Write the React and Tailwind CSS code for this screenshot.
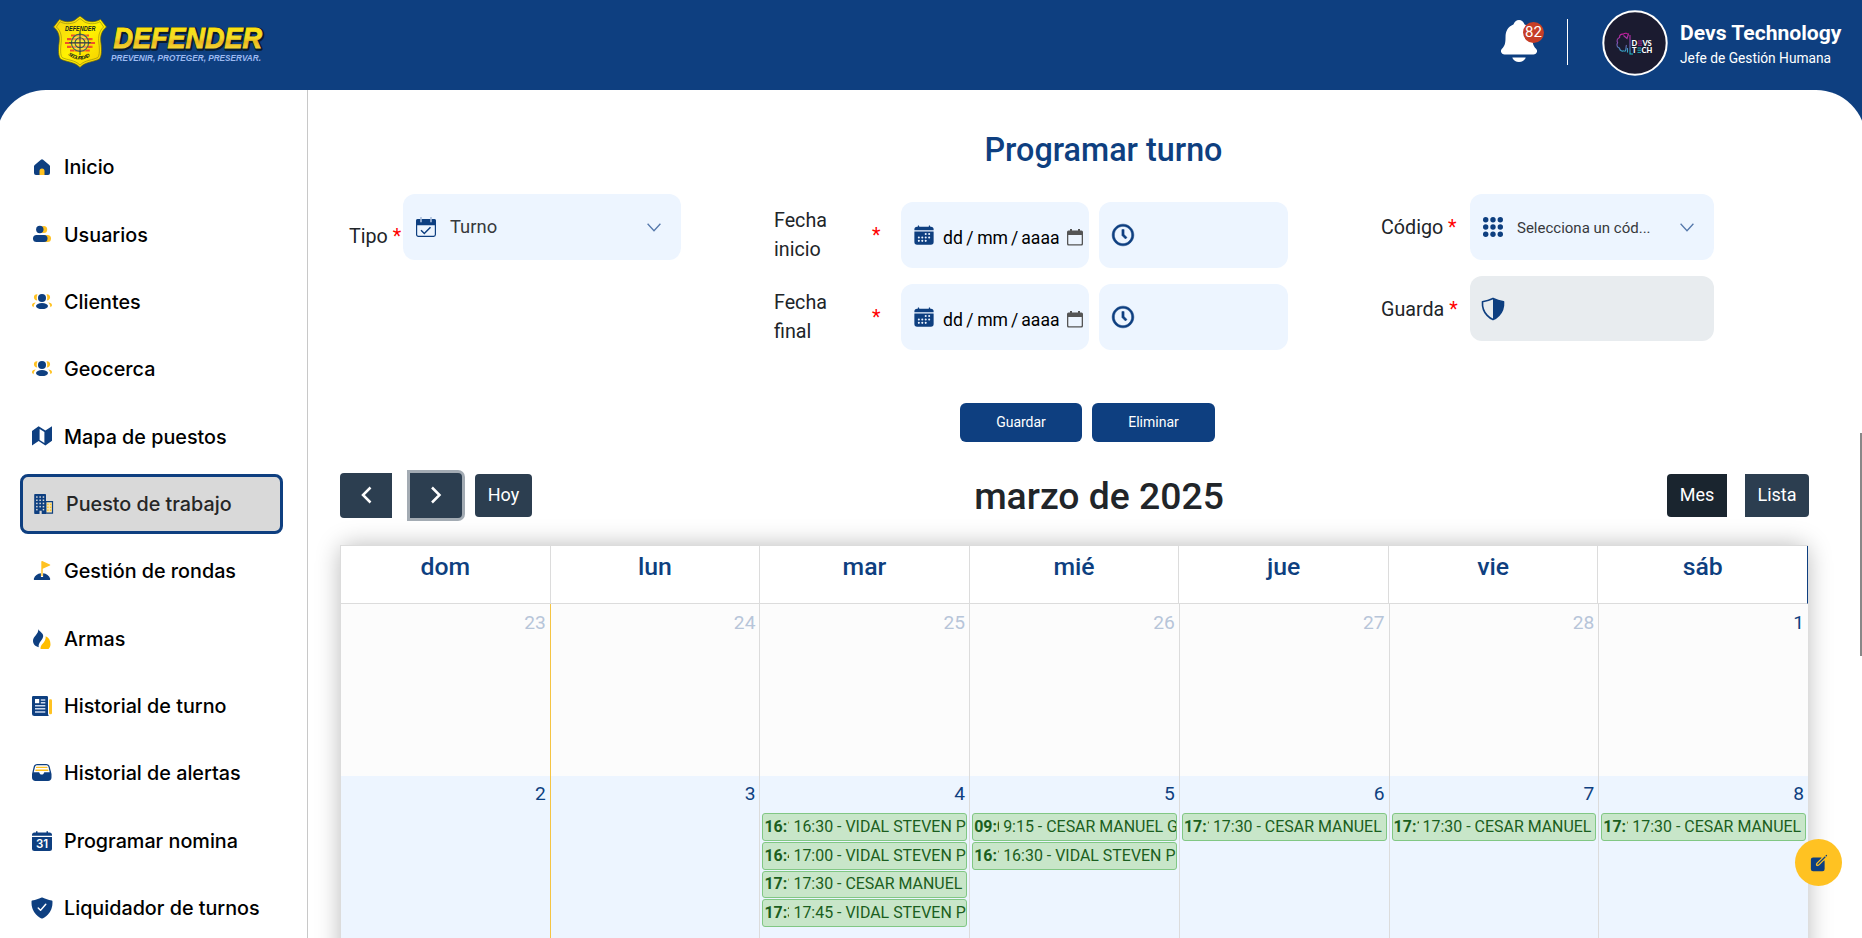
import React from "react";
import { BiTimeFive } from "react-icons/bi";
import {
  IoCalendar,
  IoShieldHalf,
  IoNotifications,
  IoShieldCheckmark,
  IoCreate,
} from "react-icons/io5";

const NAVY = "#0e3f80";
const GOLD = "#ffc222";

/* ---------- sidebar icons ---------- */

const HomeIcon = () => (
  <svg width="20" height="20" viewBox="0 0 20 20">
    <path d="M8.9 2.7a1.6 1.6 0 0 1 2.2 0l6.2 5.2c.5.4.7.9.7 1.500V16a2 2 0 0 1-2 2H4a2 2 0 0 1-2-2V9.400c0-.6.2-1.100.7-1.500z" fill={NAVY} />
    <path d="M7.500 18v-4a2.500 2.500 0 0 1 5 0v4z" fill={GOLD} />
  </svg>
);

const UsersIcon = () => (
  <svg width="20" height="20" viewBox="0 0 20 20">
    <circle cx="11.700" cy="5.500" r="3.500" fill={GOLD} />
    <rect x="6" y="11" width="13" height="7" rx="3.500" fill={GOLD} />
    <circle cx="7.800" cy="5.500" r="3.700" fill={NAVY} />
    <rect x="1" y="11" width="14.500" height="7" rx="3.500" fill={NAVY} />
  </svg>
);

const GroupIcon = () => (
  <svg width="20" height="20" viewBox="0 0 20 20">
    <g fill={GOLD}>
      <path d="M5.500 2.300C3.500 2 1.900 3.400 1.900 5.300s1.500 3.300 3.300 3.200C4.500 6.300 4.600 4 5.500 2.300zM14.500 2.300c2-.3 3.600 1.100 3.600 3s-1.500 3.300-3.300 3.200c.7-2.200.6-4.500-.3-6.200z" />
      <path d="M3.800 10.600C1.600 10.700 0 11.800 0 13.200c0 .8.600 1.500 1.600 2 .1-1.800.9-3.400 2.200-4.600zM16.200 10.600c2.200.1 3.800 1.200 3.800 2.600 0 .8-.6 1.500-1.600 2-.1-1.800-.9-3.400-2.200-4.600z" />
    </g>
    <circle cx="10" cy="6" r="4" fill={NAVY} />
    <ellipse cx="10" cy="14.100" rx="6" ry="3" fill={NAVY} />
  </svg>
);

const MapIcon = () => (
  <svg width="20" height="20" viewBox="0 0 20 20">
    <path d="M0 5L6.600.3 13.400 4.500 20 .3v14.500l-6.600 4.700-6.800-4.400L0 19.500z" fill={NAVY} />
    <path d="M7.600 2.900l4.800 3v11l-4.800-3z" fill="#fff" />
  </svg>
);

const BuildingIcon = () => (
  <svg width="20" height="20" viewBox="0 0 20 20">
    <path d="M11.800 7.700h6.700v11.500h-6.700z" fill="#f7e3ae" stroke={NAVY} strokeWidth="1.200" />
    <path d="M1 0h10.200a.8.8 0 0 1 .8.8V20H7.700v-3.300H5.500V20H1a.8.8 0 0 1-.8-.8V.8A.8.8 0 0 1 1 0z" fill={NAVY} />
    <g fill="#d9d9d9">
      {[2.300, 5.500, 8.700].map((y) =>
        [2.100, 5.400, 8.700].map((x) => <rect key={x + "-" + y} x={x} y={y} width="1.500" height="1.500" />)
      )}
      {[11.900, 14.900].map((y) => [2.100, 8.700].map((x) => <rect key={x + "-" + y} x={x} y={y} width="1.500" height="1.500" />))}
      <rect x="5.400" y="11.900" width="1.500" height="1.500" />
    </g>
    <g fill={GOLD}>
      {[9.700, 12.600, 15.500].map((y) => [13.200, 16].map((x) => <rect key={x + "-" + y} x={x} y={y} width="1.400" height="1.400" />))}
    </g>
  </svg>
);

const FlagIcon = () => (
  <svg width="20" height="20" viewBox="0 0 20 20">
    <path d="M9.300.7c0-.5.5-.8 1-.6l7.600 3.400c.5.200.5.800 0 1l-7.200 3.300V15H9.300z" fill={GOLD} />
    <path d="M8.900 12.200V16h2.200v-3.800c3.400.3 6.100 2.300 7 5.200.3 1-.1 1.600-1 1.600H2.900c-.9 0-1.300-.6-1-1.600.9-2.900 3.600-4.900 7-5.200z" fill={NAVY} />
  </svg>
);

const FlameIcon = () => (
  <svg width="20" height="20" viewBox="0 0 20 20">
    <path d="M6.300 0c.3 2.100 4.900 3.700 4.900 7 0 3.800-5.300 6.200-4.500 11.300C3.200 17.300 1 15.300 1 11.800 1 7.300 6.800 5.300 6.300 0z" fill={NAVY} />
    <path d="M13.700 7.200c3.200 1.200 4.800 4.400 4.800 8.100 0 1.900-.8 3.600-2 4.700H8.600c-.3-1.800.3-3.300 2-5.200 1.900-2.200 3.300-4.200 3.100-7.600z" fill="#ffbe00" />
  </svg>
);

const NewsIcon = () => (
  <svg width="20" height="20" viewBox="0 0 20 20">
    <rect x="17" y="3.200" width="3" height="15" rx="1.200" fill={GOLD} />
    <path d="M1.200 0h13.600A1.200 1.200 0 0 1 16 1.200v16.300c0 .9.200 1.700.8 2.500H2.500A2.500 2.500 0 0 1 0 17.500V1.200A1.200 1.200 0 0 1 1.200 0z" fill={NAVY} />
    <rect x="3" y="3" width="4.200" height="4.200" fill="#fff" />
    <path d="M8.800 4h4.500M8.800 6.800h4.500M3 9.700h10.300M3 12.800h10.300M3 16h10.300" stroke="#c9d8ee" strokeWidth="1.400" />
  </svg>
);

const TrayIcon = () => (
  <svg width="20" height="20" viewBox="0 0 20 20">
    <path d="M5.300 1h8.900c1.700 0 3.100 1 3.500 2.700L19.500 11v3.600c0 2-1.500 3.400-3.400 3.400H3.400C1.500 18 0 16.600 0 14.600V11l1.700-7.300C2.100 2 3.600 1 5.300 1z" fill={NAVY} />
    <path d="M5.300 2.300h8.900c1.200 0 2 .6 2.300 1.700L17.700 9.300h-5.100c-.4 0-.6.2-.7.600-.3 1-1.200 1.700-2.200 1.700s-1.900-.7-2.200-1.700c-.1-.4-.3-.6-.7-.6H1.700L3 4c.3-1.100 1.100-1.700 2.300-1.700z" fill="#fff" />
    <path d="M4.600 4.400h10.300M3.900 7.200h11.900" stroke={GOLD} strokeWidth="1.400" strokeLinecap="round" />
  </svg>
);

const DateIcon = () => (
  <svg width="20" height="20" viewBox="0 0 20 20">
    <path d="M4 .300h1.500V1.500h9V.300H16V1.500h1.500A2.500 2.500 0 0 1 20 4V4.700H0V4a2.500 2.500 0 0 1 2.500-2.500H4z" fill={NAVY} />
    <path d="M0 6h20v11.500a2.500 2.500 0 0 1-2.500 2.500h-15A2.500 2.500 0 0 1 0 17.500z" fill={NAVY} />
    <text x="10" y="17.200" textAnchor="middle" fontFamily="Inter, sans-serif" fontWeight="600" fontSize="11.500" fill="#fff">31</text>
  </svg>
);

const NAV = [
  { label: "Inicio", icon: <HomeIcon /> },
  { label: "Usuarios", icon: <UsersIcon /> },
  { label: "Clientes", icon: <GroupIcon /> },
  { label: "Geocerca", icon: <GroupIcon /> },
  { label: "Mapa de puestos", icon: <MapIcon /> },
  { label: "Puesto de trabajo", icon: <BuildingIcon />, active: true },
  { label: "Gestión de rondas", icon: <FlagIcon /> },
  { label: "Armas", icon: <FlameIcon /> },
  { label: "Historial de turno", icon: <NewsIcon /> },
  { label: "Historial de alertas", icon: <TrayIcon /> },
  { label: "Programar nomina", icon: <DateIcon /> },
  {
    label: "Liquidador de turnos",
    icon: (
      <span className="-mx-[2px]">
        <IoShieldCheckmark size={24} color={NAVY} />
      </span>
    ),
  },
];

/* ---------- header ---------- */

const DefenderLogo = () => (
  <svg width="220" height="56" viewBox="0 0 220 56">
    <defs>
      <linearGradient id="word" x1="0" y1="0" x2="0" y2="1">
        <stop offset="0" stopColor="#ffe600" />
        <stop offset=".5" stopColor="#f4dc28" />
        <stop offset=".62" stopColor="#e9b91c" />
        <stop offset="1" stopColor="#fff04a" />
      </linearGradient>
      <linearGradient id="badge" x1="0" y1="0" x2="1" y2="1">
        <stop offset="0" stopColor="#f5cf12" />
        <stop offset=".5" stopColor="#fff200" />
        <stop offset="1" stopColor="#f3c800" />
      </linearGradient>
      <path id="arc" d="M16 40q12 9 24 0" />
    </defs>
    <path d="M28 1l6 4.500c4 1.700 10 1.800 14.500-1.200L54.500 12c-5 4-6.500 9-5.500 16 .9 7 .8 13-1.500 16-5 3-14 2.500-19.500 8.500C22.500 46.500 13.500 47 8.500 44 6.200 41 6.100 35 7 28c1-7-.5-12-5.500-16l6-7.700C12 7.300 18 7.200 22 5.500z" fill="url(#badge)" stroke="#5c5a12" strokeWidth=".7" />
    <path d="M28 3.500l5 3.800c5 2 10.500 1.900 15-.6l3.600 5.300c-4.500 4-5.600 9.400-4.700 16.300.8 6.500.7 11.700-1 14.200-5 2.700-12.500 2.200-17.900 7.500-5.400-5.300-12.900-4.800-17.900-7.500-1.700-2.500-1.800-7.700-1-14.200.9-6.900-.2-12.300-4.700-16.300L8 6.700c4.500 2.500 10 2.600 15 .6z" fill="none" stroke="#8b8413" strokeWidth=".6" />
    <text x="13" y="16" textLength="30.500" lengthAdjust="spacingAndGlyphs" fontFamily="Liberation Sans, sans-serif" fontWeight="700" fontStyle="italic" fontSize="6.500" fill="#14261c">DEFENDER</text>
    <g stroke="#f0502a" strokeWidth="2.200">
      <path d="M19 20.500h18M15 24.200h26M13 28h30M15 31.800h26M18 35.500h20" strokeDasharray="4.500 .6" />
    </g>
    <circle cx="28" cy="27.800" r="8.600" fill="#f6e27a" fillOpacity=".45" stroke="#3d6b52" strokeWidth="1.200" />
    <circle cx="28" cy="27.800" r="5" fill="none" stroke="#2f6150" strokeWidth="1.100" />
    <path d="M28 16v24M17 27.800h22" stroke="#1c3f3a" strokeWidth="1" />
    <text fontFamily="Liberation Sans, sans-serif" fontWeight="700" fontStyle="italic" fontSize="5" fill="#14261c">
      <textPath href="#arc" textLength="24">SEGURIDAD</textPath>
    </text>
    <text x="62.500" y="34.300" textLength="148.500" lengthAdjust="spacingAndGlyphs" fontFamily="Liberation Sans, sans-serif" fontWeight="700" fontStyle="italic" fontSize="29.500" fill="#0b1c2c" stroke="#0b1c2c" strokeWidth="3.500" strokeLinejoin="round">DEFENDER</text>
    <text x="61.500" y="33.300" textLength="148.500" lengthAdjust="spacingAndGlyphs" fontFamily="Liberation Sans, sans-serif" fontWeight="700" fontStyle="italic" fontSize="29.500" fill="url(#word)" stroke="url(#word)" strokeWidth="1">DEFENDER</text>
    <text x="59" y="45.600" textLength="150" lengthAdjust="spacingAndGlyphs" fontFamily="Liberation Sans, sans-serif" fontWeight="700" fontStyle="italic" fontSize="9" fill="#9dbaf0">PREVENIR, PROTEGER, PRESERVAR.</text>
  </svg>
);

const Avatar = () => (
  <svg width="66" height="66" viewBox="0 0 66 66">
    <defs>
      <linearGradient id="brain" gradientUnits="userSpaceOnUse" x1="0" y1="22" x2="0" y2="44">
        <stop offset="0" stopColor="#d3149b" />
        <stop offset=".55" stopColor="#7a5ab8" />
        <stop offset="1" stopColor="#19c3cf" />
      </linearGradient>
    </defs>
    <circle cx="33" cy="33" r="31.700" fill="#1b1b30" stroke="#fff" strokeWidth="2" />
    <path d="M26.500 25.500c-.5-2.500-3.500-3-5.200-1.300-2.300-.5-4 1-3.700 3.200-2.300 1-3.200 3.200-2 5.200-1.400 2.400-.4 5 1.900 5.500.3 2.600 2.700 3.700 4.600 2.500M21.500 25.500l3.500 3 1.600-5M22.500 41.500c2.500-1 1-5 2-6.500M25.500 38v4.500M28 25v19h3" fill="none" stroke="url(#brain)" strokeWidth="1.100" />
    <g fontFamily="Lato, sans-serif" fontWeight="900" fontSize="7.500" fill="#fff">
      <text x="29.500" y="35.500">D</text>
      <text x="40.500" y="35.500">VS</text>
      <text x="30" y="42.800">T</text>
      <text x="39.500" y="42.800">CH</text>
    </g>
    <path d="M36 31h4M36 33.100h4M36 35.200h4" stroke="#a5248f" strokeWidth="1" />
    <path d="M35.500 38h3.500M35.500 40.200h3.500M35.500 42.400h3.500" stroke="#1fb7c6" strokeWidth="1" />
  </svg>
);

const Header = () => (
  <header className="flex h-[90px] w-full items-start bg-[#0e3f80]">
    <div className="pt-[15px] pl-[52px]">
      <DefenderLogo />
    </div>
    <div className="ml-auto flex items-start text-white">
      <div className="relative mt-[17px] h-[48px] w-[48px]">
        <IoNotifications size={48} />
        <span className="absolute top-[5px] left-[28px] flex h-[21px] w-[21px] items-center justify-center rounded-full bg-[#c63e27] text-[15px] leading-none">
          82
        </span>
      </div>
      <div className="mt-[19px] ml-[24px] h-[46px] w-px bg-white" />
      <div className="mt-[9.500px] ml-[34px]">
        <Avatar />
      </div>
      <div className="mt-[18px] ml-[12px] w-[182px]">
        <div className="text-[21.100px] leading-[30px] font-bold">Devs Technology</div>
        <div className="text-[13.750px] leading-[20px]">Jefe de Gestión Humana</div>
      </div>
    </div>
  </header>
);

const Sidebar = () => (
  <aside className="w-[312px] shrink-0 border-r border-[#c8c8c8] pl-1">
    <nav className="flex flex-col gap-[7.360px] pt-[47px] pl-5 font-['Inter',sans-serif] text-[19.750px] font-medium">
      {NAV.map((n) => (
        <div
          key={n.label}
          className={
            n.active
              ? "flex h-[60px] w-[263px] shrink-0 items-center gap-3 rounded-[8px] border-[3px] border-[#0e3f80] bg-[#d9d9d9] pl-[11px] text-[#262626]"
              : "flex h-[60px] w-[263px] shrink-0 items-center gap-3 pl-[12px] text-black"
          }
        >
          {n.icon}
          <span className="mt-[2px]">{n.label}</span>
        </div>
      ))}
    </nav>
  </aside>
);

/* ---------- form ---------- */

const Chevron = () => (
  <svg width="14" height="9" viewBox="0 0 14 9">
    <path d="M.6.800L7 7.700 13.400.800" fill="none" stroke="#5578ab" strokeWidth="1.300" />
  </svg>
);

const TurnIcon = () => (
  <svg width="20" height="20" viewBox="0 0 20 20">
    <rect x=".6" y="2.600" width="18.800" height="16.800" rx="1.800" fill="none" stroke={NAVY} strokeWidth="1.200" />
    <path d="M2 2h16a2 2 0 0 1 2 2v4.300H0V4a2 2 0 0 1 2-2z" fill={NAVY} />
    <path d="M5 0v5.300M15 0v5.300" stroke="#a9bddb" strokeWidth="1.600" />
    <path d="M5 13.300l3.300 3.200 6.200-6.300" fill="none" stroke={NAVY} strokeWidth="1.500" />
  </svg>
);

const DotsIcon = () => (
  <svg width="20" height="20" viewBox="0 0 20 20" fill={NAVY}>
    {[2.700, 10, 17.300].map((y) => [2.700, 10, 17.300].map((x) => <circle key={x + "-" + y} cx={x} cy={y} r="2.700" />))}
  </svg>
);

const PickerIcon = () => (
  <svg width="16" height="17" viewBox="0 0 16 17">
    <path d="M3 0h2v1.500h6V0h2v1.500h1.500A1.500 1.500 0 0 1 16 3v12a1.500 1.500 0 0 1-1.500 1.500h-13A1.500 1.500 0 0 1 0 15V3a1.500 1.500 0 0 1 1.500-1.500H3zM1.300 6v8.500c0 .4.300.7.700.7h12c.4 0 .7-.3.7-.7V6z" fill="#555" />
  </svg>
);

const Star = () => <span className="text-[#ff0000]">*</span>;

const DateRow = ({ a, b }) => (
  <div className="flex h-[66px] items-start">
    <div className="mt-[4px] w-[98px] text-[19.700px] leading-[29px]">
      {a}
      <br />
      {b}
    </div>
    <div className="mt-[19px] w-[29px] text-[19.700px] leading-[29px]">
      <Star />
    </div>
    <div className="flex h-[66px] w-[188px] items-center rounded-[12px] bg-[#edf5ff] pl-[12px]">
      <IoCalendar size={22} color={NAVY} className="shrink-0" />
      <span className="mt-[6px] ml-[8px] w-[124px] text-[17.600px] whitespace-nowrap text-black">
        dd<span className="mx-[3.500px]">/</span>mm<span className="mx-[3px]">/</span>aaaa
      </span>
      <span className="mt-[4px]">
        <PickerIcon />
      </span>
    </div>
    <div className="ml-[10px] flex h-[66px] w-[189px] items-center rounded-[12px] bg-[#edf5ff] pl-[11px]">
      <BiTimeFive size={26} color={NAVY} stroke={NAVY} strokeWidth="0.500" />
    </div>
  </div>
);

const Form = () => (
  <section className="text-[#212529]">
    <h2 className="pt-[39px] pl-[676.500px] text-[32.300px] leading-[42px] font-medium text-[#0e3f80]">Programar turno</h2>
    <div className="mt-[23px] flex h-[155px] items-start pl-[41px]">
      <div className="flex w-[425px] items-start">
        <div className="mt-[28px] w-[54px] text-[19.700px] leading-[29px] whitespace-nowrap">
          Tipo <Star />
        </div>
        <div className="flex h-[66px] w-[278px] items-center rounded-[12px] bg-[#edf5ff] pr-[20px] pl-[13px]">
          <TurnIcon />
          <span className="ml-[14px] text-[18.400px] text-[#37393c]">Turno</span>
          <span className="ml-auto">
            <Chevron />
          </span>
        </div>
      </div>
      <div className="flex w-[607px] flex-col gap-[16px] pt-[8px]">
        <DateRow a="Fecha" b="inicio" />
        <DateRow a="Fecha" b="final" />
      </div>
      <div className="flex flex-col gap-[16px]">
        <div className="flex items-center">
          <div className="mt-[2px] w-[89px] text-[19.700px]">
            Código <Star />
          </div>
          <div className="flex h-[66px] w-[244px] items-center rounded-[12px] bg-[#edf5ff] pr-[20px] pl-[13px]">
            <DotsIcon />
            <span className="mt-[2px] ml-[14px] text-[15px] text-[#37393c]">Selecciona un cód...</span>
            <span className="ml-auto">
              <Chevron />
            </span>
          </div>
        </div>
        <div className="flex items-center">
          <div className="mt-[2px] w-[89px] text-[19.700px]">
            Guarda <Star />
          </div>
          <div className="flex h-[65px] w-[244px] items-center rounded-[12px] bg-[#e8ecef] pl-[10px]">
            <IoShieldHalf size={26} color={NAVY} />
          </div>
        </div>
      </div>
    </div>
    <div className="mt-[54px] flex gap-[10px] pl-[652px] text-[14px] text-white">
      <button className="h-[39px] w-[122px] rounded-[6px] bg-[#0e3f80]">Guardar</button>
      <button className="h-[39px] w-[123px] rounded-[6px] bg-[#0e3f80]">Eliminar</button>
    </div>
  </section>
);

/* ---------- calendar ---------- */

const Toolbar = () => (
  <div className="mt-[28px] flex h-[50px] items-center pl-[32px] text-[18px] text-white">
    <button className="flex h-[45px] w-[52px] items-center justify-center rounded-l-[4px] bg-[#2c3e50]">
      <svg width="12" height="18" viewBox="0 0 12 18">
        <path d="M10.500 1.500L3 9l7.500 7.500" fill="none" stroke="#fff" strokeWidth="2.500" />
      </svg>
    </button>
    <button className="ml-[18px] flex h-[45px] w-[52px] items-center justify-center rounded-r-[4px] bg-[#2c3e50] shadow-[0_0_0_3px_#a3abb3]">
      <svg width="12" height="18" viewBox="0 0 12 18">
        <path d="M2 1.500L9.500 9 2 16.500" fill="none" stroke="#fff" strokeWidth="2.500" />
      </svg>
    </button>
    <button className="ml-[13px] h-[43px] w-[57px] rounded-[4px] bg-[#2c3e50] pb-[2px]">Hoy</button>
    <h2 className="mt-px ml-[442px] w-[250px] text-center text-[37.300px] leading-[44px] font-medium whitespace-nowrap text-[#212529]">
      marzo de 2025
    </h2>
    <button className="ml-[443px] h-[43px] w-[60px] rounded-l-[4px] bg-[#1a252f] pb-[2px]">Mes</button>
    <button className="ml-[18px] h-[43px] w-[64px] rounded-r-[4px] bg-[#2c3e50] pb-[2px]">Lista</button>
  </div>
);

const DAYS = ["dom", "lun", "mar", "mié", "jue", "vie", "sáb"];

const WEEK1 = ["23", "24", "25", "26", "27", "28", "1"];

const WEEK2 = [
  { d: "2", ev: [] },
  { d: "3", ev: [] },
  {
    d: "4",
    ev: [
      ["16:15", "16:30 - VIDAL STEVEN P"],
      ["16:45", "17:00 - VIDAL STEVEN P"],
      ["17:15", "17:30 - CESAR MANUEL"],
      ["17:30", "17:45 - VIDAL STEVEN P"],
    ],
  },
  {
    d: "5",
    ev: [
      ["09:00", "9:15 - CESAR MANUEL G"],
      ["16:15", "16:30 - VIDAL STEVEN P"],
    ],
  },
  { d: "6", ev: [["17:15", "17:30 - CESAR MANUEL"]] },
  { d: "7", ev: [["17:15", "17:30 - CESAR MANUEL"]] },
  { d: "8", ev: [["17:15", "17:30 - CESAR MANUEL"]] },
];

const cellBorder = (i) =>
  i === 6 ? "" : i === 0 ? "border-r border-r-[#f5c443]" : "border-r border-r-[#dcdcdc]";

const Calendar = () => (
  <div className="mt-[25px] ml-[32px] w-[1468px] rounded-[10px] shadow-[0_0_25px_rgba(0,0,0,0.27)]">
    <div className="border-t border-l border-[#dcdcdc] bg-[#edf5ff]">
      <div className="flex h-[58px] w-[1467px] border-r border-b border-r-[#0e3f80] border-b-[#dcdcdc] bg-white">
        {DAYS.map((d, i) => (
          <div
            key={d}
            className={
              "flex-1 pt-[6px] text-center text-[24.800px] leading-[30px] font-medium text-[#0e3f80] " +
              (i < 6 ? "border-r border-r-[#dcdcdc]" : "")
            }
          >
            {d}
          </div>
        ))}
      </div>
      <div className="flex h-[172px] bg-[#fcfcfc]">
        {WEEK1.map((d, i) => (
          <div
            key={d}
            className={
              "flex-1 pt-[5px] pr-[4px] text-right text-[19.200px] leading-[28px] " +
              cellBorder(i) +
              (i < 6 ? " text-[#b7c5d9]" : " text-[#0e3f80]")
            }
          >
            {d}
          </div>
        ))}
      </div>
      <div className="flex h-[200px] bg-[#edf5ff]">
        {WEEK2.map((c, i) => (
          <div key={c.d} className={"min-w-0 flex-1 " + cellBorder(i)}>
            <div className="pt-[4px] pr-[4px] text-right text-[19.200px] leading-[28px] text-[#0e3f80]">{c.d}</div>
            <div className="mt-[5px] mr-[2px] ml-[2px] flex flex-col gap-[1px]">
              {c.ev.map(([t, title]) => (
                <div
                  key={t}
                  className="flex h-[27.800px] items-center overflow-hidden rounded-[3px] border border-[#81c784] bg-[#c8e6c9] pl-[1px] text-[15.950px] leading-[24px] whitespace-nowrap text-[#1b5e20]"
                >
                  <span className="mr-[4px] w-[25px] shrink-0 overflow-hidden font-bold">{t}</span>
                  <span>{title}</span>
                </div>
              ))}
            </div>
          </div>
        ))}
      </div>
    </div>
  </div>
);

export default function App() {
  return (
    <div className="relative h-[938px] w-[1862px] overflow-hidden bg-[#0e3f80] font-['Roboto',sans-serif]">
      <Header />
      <div className="-mx-1 flex h-[848px] overflow-hidden rounded-t-[50px] bg-white">
        <Sidebar />
        <main className="min-w-0 flex-1 overflow-hidden">
          <Form />
          <Toolbar />
          <Calendar />
        </main>
      </div>
      <div className="absolute top-[839px] left-[1795px] flex h-[47px] w-[47px] items-center justify-center rounded-full bg-[#ffc222]">
        <IoCreate size={20} color={NAVY} />
      </div>
      <div className="absolute top-[433px] right-0 h-[223px] w-[2px] bg-[#888888]" />
    </div>
  );
}
